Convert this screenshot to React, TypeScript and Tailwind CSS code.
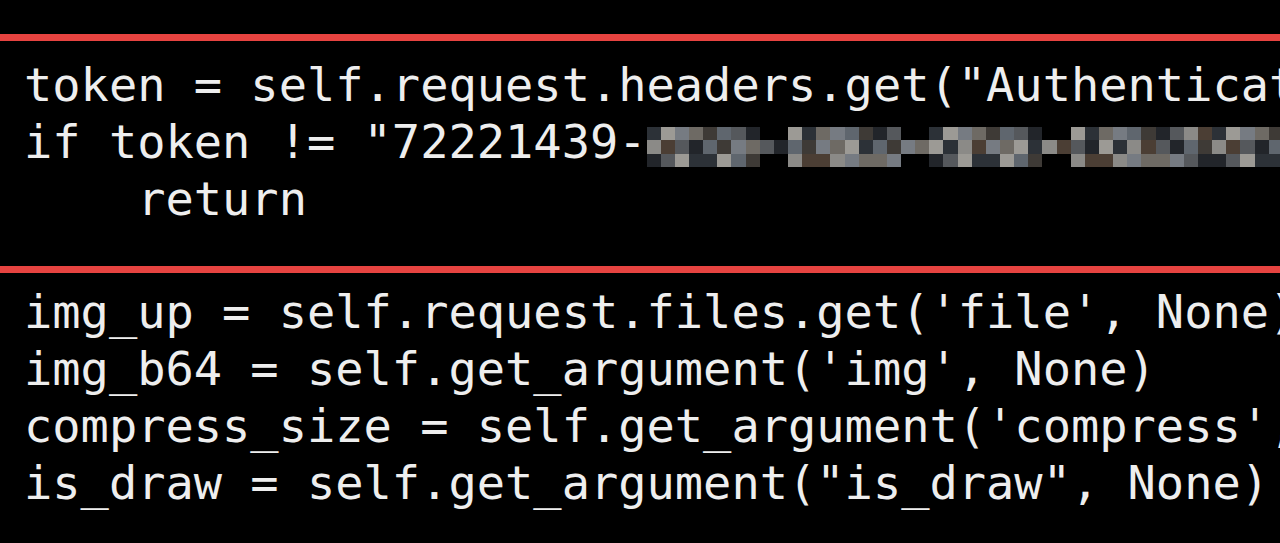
import React from 'react';

// mosaic palette for the blurred token part
const TILE = [
  'bg-[#2c3137]',
  'bg-[#55585c]',
  'bg-[#6e6a64]',
  'bg-[#8b8a87]',
  'bg-[#3e3a36]',
  'bg-[#9c9a95]',
  'bg-[#22252a]',
  'bg-[#767b82]',
  'bg-[#4b3e34]',
  'bg-[#5f666e]',
];

// f = full char, d = dash (middle row only)
const HIDDEN = 'ffffdffffdffffdffffffffffff';

const MosaicChar: React.FC<{ kind: string; idx: number }> = ({ kind, idx }) => {
  const cells = [];
  for (let r = 0; r < 3; r++) {
    for (let c = 0; c < 2; c++) {
      const on = kind === 'f' || r === 1;
      const tone = TILE[(idx * 7 + r * 3 + c * 5 + ((idx * r) % 4)) % TILE.length];
      cells.push(<span key={`${r}-${c}`} className={on ? tone : 'bg-black'} />);
    }
  }
  return (
    <span className="inline-block h-[40px] w-[1ch] overflow-hidden align-[-9px]">
      <span className="grid h-full w-full grid-cols-2 grid-rows-3">{cells}</span>
    </span>
  );
};

const RedRule = () => <div className="h-[7px] w-full bg-[#e64340]" />;

export default function App() {
  return (
    <div className="h-[543px] w-full overflow-hidden bg-black pt-[34px] font-['DejaVu_Sans_Mono','Liberation_Mono',monospace] text-[47px] leading-[57px] text-[#eeeeee]">
      <RedRule />
      <div className="h-[225px] whitespace-pre pl-6 pt-[15px]">
        <div>{'token = self.request.headers.get("Authentication", None)'}</div>
        <div className="h-[57px]">
          {'if token != "72221439-'}
          {HIDDEN.split('').map((k, i) => (
            <MosaicChar key={i} kind={k} idx={i} />
          ))}
        </div>
        <div>{'    return'}</div>
      </div>
      <RedRule />
      <div className="whitespace-pre pl-6 pt-[10px]">
        <div>{"img_up = self.request.files.get('file', None)"}</div>
        <div>{"img_b64 = self.get_argument('img', None)"}</div>
        <div>{"compress_size = self.get_argument('compress', None)"}</div>
        <div>{'is_draw = self.get_argument("is_draw", None)'}</div>
      </div>
    </div>
  );
}
